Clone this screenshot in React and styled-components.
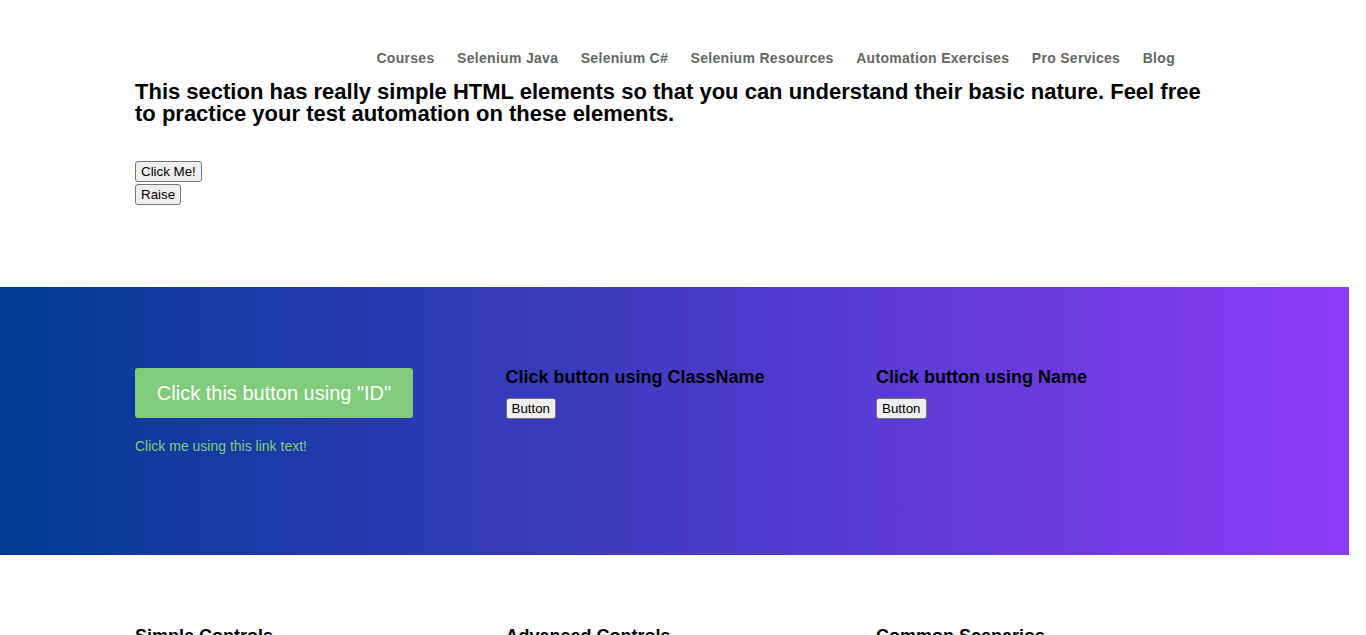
import React from 'react';
import styled, { createGlobalStyle } from 'styled-components';

const GlobalStyle = createGlobalStyle`
  body {
    margin: 0;
    padding-right: 17px;
    background: #ffffff;
    font-family: "Liberation Sans", Arial, sans-serif;
    color: #000;
  }
`;

const navItems = ['Courses', 'Selenium Java', 'Selenium C#', 'Selenium Resources', 'Automation Exercises', 'Pro Services', 'Blog'];

const columns = [
  { title: 'Click button using ClassName' },
  { title: 'Click button using Name' },
];

const bottomTitles = ['Simple Controls', 'Advanced Controls', 'Common Scenarios'];

const App = () => {
  return (
    <>
      <GlobalStyle />
      <Container>
        <Nav>
          {navItems.map((item) => (
            <NavLink key={item}>{item}</NavLink>
          ))}
        </Nav>
        <Intro>
          This section has really simple HTML elements so that you can understand their basic nature. Feel free to practice your test automation on these elements.
        </Intro>
        <ButtonStack>
          <PlainButton>Click Me!</PlainButton>
          <PlainButton>Raise</PlainButton>
        </ButtonStack>
      </Container>

      <Band>
        <Container>
          <Columns>
            <Column>
              <GreenButton>Click this button using "ID"</GreenButton>
              <TextLink>Click me using this link text!</TextLink>
            </Column>
            {columns.map((c) => (
              <Column key={c.title}>
                <ColTitle>{c.title}</ColTitle>
                <PlainButton>Button</PlainButton>
              </Column>
            ))}
          </Columns>
        </Container>
      </Band>

      <Container>
        <BottomColumns>
          {bottomTitles.map((t) => (
            <Column key={t}>
              <ColTitle>{t}</ColTitle>
            </Column>
          ))}
        </BottomColumns>
      </Container>
    </>
  );
};

const Container = styled.div`
  width: 1080px;
  margin: 0 auto 0 135px;
`;

const Nav = styled.nav`
  display: flex;
  justify-content: flex-end;
  gap: 22.5px;
  padding: 50px 40px 0 0;
  height: 22px;
`;

const NavLink = styled.a`
  font-size: 14px;
  font-weight: bold;
  color: #666666;
  letter-spacing: 0.3px;
  cursor: pointer;
`;

const Intro = styled.h2`
  margin: 9px 0 0;
  font-size: 22px;
  line-height: 22px;
  font-weight: bold;
`;

const ButtonStack = styled.div`
  display: flex;
  flex-direction: column;
  align-items: flex-start;
  gap: 2px;
  padding: 36px 0 82px;
`;

const PlainButton = styled.button`
  height: 21px;
  font-family: "Liberation Sans", Arial, sans-serif;
  font-size: 13.33px;
  padding: 0 5px;
  background: #efefef;
  border: 1px solid #767676;
  border-radius: 3px;
  color: #000;
  cursor: pointer;
`;

const Band = styled.section`
  height: 268px;
  background: linear-gradient(to right, #003a94, #8b3bf6);
`;

const Columns = styled.div`
  display: grid;
  grid-template-columns: repeat(3, 370.5px);
  padding-top: 81px;
`;

const Column = styled.div`
  display: flex;
  flex-direction: column;
  align-items: flex-start;
`;

const GreenButton = styled.button`
  width: 278px;
  height: 50px;
  background: #80cc7a;
  color: #ffffff;
  border: none;
  border-radius: 3px;
  font-family: "Liberation Sans", Arial, sans-serif;
  font-size: 20px;
  cursor: pointer;
`;

const TextLink = styled.a`
  margin-top: 20px;
  font-size: 14px;
  color: #82cc7a;
  cursor: pointer;
`;

const ColTitle = styled.h4`
  margin: 0 0 12px;
  font-size: 18px;
  line-height: 18px;
  font-weight: bold;
`;

const BottomColumns = styled.div`
  display: grid;
  grid-template-columns: repeat(3, 370.5px);
  padding: 72px 0 400px;
`;

export default App;
